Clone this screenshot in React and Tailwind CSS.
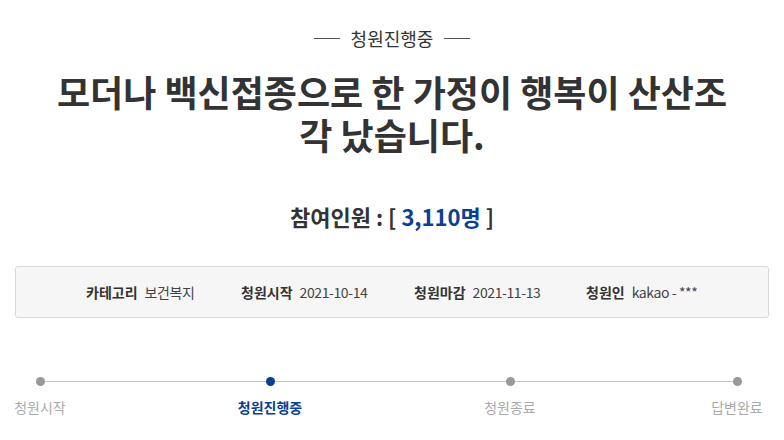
import React from "react";

const font = { fontFamily: '"Noto Sans CJK KR", "Noto Sans", sans-serif' };

const info = [
  { label: "카테고리", value: "보건복지" },
  { label: "청원시작", value: "2021-10-14" },
  { label: "청원마감", value: "2021-11-13" },
  { label: "청원인", value: "kakao - ***" },
];

const steps = [
  { label: "청원시작", w: "w-[50px]", ml: "ml-[15px]", active: false },
  { label: "청원진행중", w: "w-[80px]", ml: "ml-[165px]", active: true },
  { label: "청원종료", w: "w-[80px]", ml: "ml-[160px]", active: false },
  { label: "답변완료", w: "w-[60px]", ml: "ml-[157px]", active: false },
];

export default function App() {
  return (
    <div className="w-[784px] h-[440px] bg-white text-[#333] overflow-hidden" style={font}>
      <div className="pt-[25px] flex items-center justify-center gap-[11px]">
        <span className="w-[26px] h-px bg-[#555]" />
        <span className="text-[18px] leading-[26px]">청원진행중</span>
        <span className="w-[26px] h-px bg-[#555]" />
      </div>

      <h1 className="mx-auto mt-[19px] w-[680px] text-center text-[36px] leading-[43px] font-bold break-all">
        모더나 백신접종으로 한 가정이 행복이 산산조각 났습니다.
      </h1>

      <div className="mt-[45px] text-center text-[22px] leading-[30px] font-bold">
        참여인원 : [ <span className="text-[#0a3f91]">3,110명</span> ]
      </div>

      <div className="mx-[15px] mt-[35px] h-[52px] rounded-[3px] border border-[#d9d9d9] bg-[#f6f6f6] flex items-center pl-[70px] text-[14px]">
        {info.map((it, i) => (
          <div key={it.label} className={"flex items-center gap-[7px] " + (i === 0 ? "w-[155px]" : i === 1 ? "w-[173px]" : i === 2 ? "w-[172px]" : "")}>
            <span className="font-bold">{it.label}</span>
            <span className="text-[#444] tracking-[-0.4px]">{it.value}</span>
          </div>
        ))}
      </div>

      <div className="relative mt-[59px]">
        <div className="absolute left-[40px] right-[47px] top-[4px] h-px bg-[#c4c4c4]" />
        <div className="flex">
          {steps.map((s) => (
            <div key={s.label} className={"relative flex flex-col items-center " + s.w + " " + s.ml}>
              <span className={"w-[9px] h-[9px] rounded-full " + (s.active ? "bg-[#0a3f91]" : "bg-[#999]")} />
              <span className={"mt-[11px] text-[14px] leading-[20px] whitespace-nowrap " + (s.active ? "text-[#0a3f91] font-bold" : "text-[#aaa]")}>
                {s.label}
              </span>
            </div>
          ))}
        </div>
      </div>
    </div>
  );
}
